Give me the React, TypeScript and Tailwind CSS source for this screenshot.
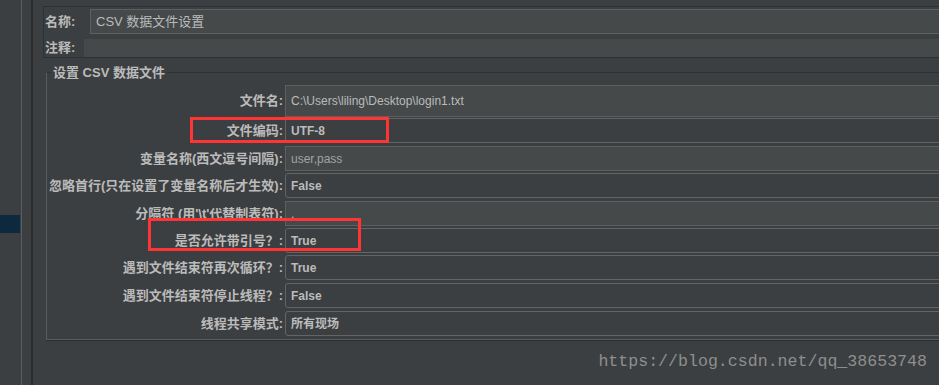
import React from 'react';

// --- CSV Data Set Config (JMeter, Darcula) ---
type Row = {
  label: string;
  value: string;
  kind: 'text' | 'combo';
  gap: string;
  height: string;
  muted?: boolean;
};

const rows: Row[] = [
  { label: '文件名:', value: 'C:\\Users\\liling\\Desktop\\login1.txt', kind: 'text', gap: 'mt-0', height: 'h-[32px]' },
  { label: '文件编码:', value: 'UTF-8', kind: 'combo', gap: 'mt-[1px]', height: 'h-[25px]' },
  { label: '变量名称(西文逗号间隔):', value: 'user,pass', kind: 'text', gap: 'mt-[3px]', height: 'h-[25px]', muted: true },
  { label: '忽略首行(只在设置了变量名称后才生效):', value: 'False', kind: 'combo', gap: 'mt-[2px]', height: 'h-[25px]' },
  { label: "分隔符 (用'\\t'代替制表符):", value: ',', kind: 'text', gap: 'mt-[3px]', height: 'h-[25px]' },
  { label: '是否允许带引号？:', value: 'True', kind: 'combo', gap: 'mt-[2px]', height: 'h-[25px]' },
  { label: '遇到文件结束符再次循环？:', value: 'True', kind: 'combo', gap: 'mt-[2px]', height: 'h-[25px]' },
  { label: '遇到文件结束符停止线程？:', value: 'False', kind: 'combo', gap: 'mt-[3px]', height: 'h-[25px]' },
  { label: '线程共享模式:', value: '所有现场', kind: 'combo', gap: 'mt-[3px]', height: 'h-[25px]' },
];

const font = "font-['Liberation_Sans','Noto_Sans_CJK_SC',sans-serif]";

const Field: React.FC<{ row: Row }> = ({ row }) => {
  if (row.kind === 'combo') {
    return (
      <div className="flex h-full flex-1 items-center rounded-[3px] border border-[#646464] bg-[#3c3f41] pl-[5px] text-[12px] font-bold text-[#bbbbbb]">
        {row.value}
      </div>
    );
  }
  return (
    <div
      className={`flex h-full flex-1 items-center border border-[#5e6060] bg-[#45494a] pl-[5px] text-[12px] ${
        row.muted ? 'text-[#a3a3a3]' : 'text-[#bbbbbb]'
      }`}
    >
      {row.value}
    </div>
  );
};

const App: React.FC = () => {
  return (
    <div className={`relative flex h-[385px] w-[939px] overflow-hidden bg-[#3c3f41] ${font}`}>
      {/* --- Tree panel (cut off) --- */}
      <aside className="w-[22px] shrink-0 border-r border-[#5b5e60] pt-[215px]">
        <div className="h-[18px] w-[20px] bg-[#0d293e]" />
      </aside>
      <div className="w-[9px] shrink-0" />
      <div className="w-[2px] shrink-0 bg-[#2b2b2b]" />

      {/* --- Config panel --- */}
      <main className="w-[1000px] shrink-0 pl-[10px] pt-[6px]">
        {/* name / comment box */}
        <div className="border-b border-l border-t border-[#2e3133] pt-[2px]">
          <div className="flex h-[25px] items-center">
            <div className="w-[46px] pl-[1px] text-[13px] font-bold text-[#bbbbbb]">名称:</div>
            <div className="flex h-full flex-1 items-center border border-[#5e6060] bg-[#45494a] pl-[5px] text-[13px] text-[#bbbbbb]">
              CSV 数据文件设置
            </div>
          </div>
          <div className="mt-[5px] flex h-[18px] items-center">
            <div className="w-[40px] pl-[1px] text-[13px] font-bold text-[#bbbbbb]">注释:</div>
            <div className="h-full flex-1 bg-[#45494a]" />
          </div>
        </div>

        {/* settings group */}
        <div className="relative ml-[3px] mt-[14px] border border-b-[#5a5d5f] border-l-[#5a5d5f] border-t-[#2f3234] pb-[3px] pt-[12px] shadow-[0_1px_0_#2b2d2f]">
          <span className="absolute left-[4px] top-[-8px] bg-[#3c3f41] px-[2px] text-[13px] font-bold leading-[16px] text-[#bbbbbb]">
            设置 CSV 数据文件
          </span>
          {rows.map((row) => (
            <div key={row.label} className={`flex items-center ${row.gap} ${row.height}`}>
              <div className="w-[238px] shrink-0 pr-[2px] text-right text-[13px] font-bold text-[#bbbbbb]">
                {row.label}
              </div>
              <Field row={row} />
            </div>
          ))}
        </div>
      </main>

      {/* --- Annotations --- */}
      <div className="absolute left-[190px] top-[117px] h-[26px] w-[199px] border-[3px] border-[#ff3535]" />
      <div className="absolute left-[148px] top-[218px] h-[33px] w-[213px] border-[3px] border-[#ff3535]" />

      <div className="absolute right-[12px] top-[352px] font-['Liberation_Mono',monospace] text-[16.6px] leading-[20px] text-[#8e8e8e]">
        https://blog.csdn.net/qq_38653748
      </div>
    </div>
  );
};

export default App;
